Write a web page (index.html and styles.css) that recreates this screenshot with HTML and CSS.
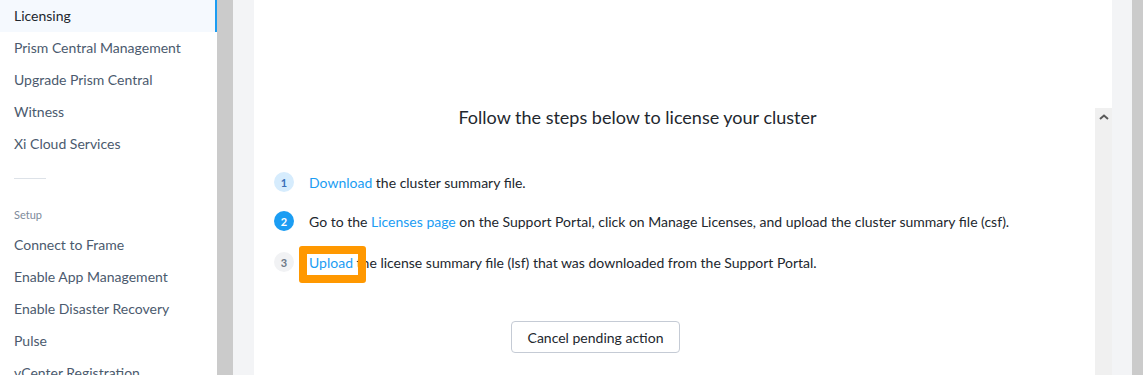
FILE: index.html
```html
<!DOCTYPE html>
<html>
<head>
<meta charset="utf-8">
<link rel="stylesheet" href="styles.css">
</head>
<body>
<div class="page">
  <nav class="sidebar">
    <div class="nav-item active">Licensing</div>
    <div class="nav-item">Prism Central Management</div>
    <div class="nav-item">Upgrade Prism Central</div>
    <div class="nav-item">Witness</div>
    <div class="nav-item">Xi Cloud Services</div>
    <div class="divider"></div>
    <div class="section">Setup</div>
    <div class="nav-item">Connect to Frame</div>
    <div class="nav-item">Enable App Management</div>
    <div class="nav-item">Enable Disaster Recovery</div>
    <div class="nav-item">Pulse</div>
    <div class="nav-item">vCenter Registration</div>
  </nav>
  <div class="gutter"></div>
  <main class="main">
    <div class="panel">
      <div class="scroll">
        <div class="content">
          <h1 class="title">Follow the steps below to license your cluster</h1>
          <ol class="steps">
            <li class="step"><span class="num n1">1</span><span><a class="link">Download</a> the cluster summary file.</span></li>
            <li class="step"><span class="num n2">2</span><span>Go to the <a class="link">Licenses page</a> on the Support Portal, click on Manage Licenses, and upload the cluster summary file (csf).</span></li>
            <li class="step"><span class="num n3">3</span><span class="upload-wrap"><a class="link">Upload</a><span class="highlight"></span></span><span>&nbsp;the license summary file (lsf) that was downloaded from the Support Portal.</span></li>
          </ol>
          <button class="btn">Cancel pending action</button>
        </div>
        <div class="vscroll">
          <svg width="10" height="6" viewBox="0 0 10 6"><path d="M1 5 L5 1.5 L9 5" fill="none" stroke="#5a5a5a" stroke-width="2"/></svg>
        </div>
      </div>
    </div>
  </main>
  <div class="rgutter"></div>
</div>
</body>
</html>
```

FILE: styles.css
```css
html, body { margin: 0; padding: 0; }
body { font-family: Lato, "Open Sans", sans-serif; overflow: hidden; width: 1143px; height: 375px; }
.page { display: flex; height: 375px; }
.sidebar { width: 217px; flex: none; background: #fff; }
.nav-item { height: 32px; line-height: 32px; padding-left: 14px; font-size: 14px; color: #4b5a6e; white-space: nowrap; box-sizing: border-box; }
.nav-item.active { background: #f5f9fe; color: #22272e; border-right: 2px solid #1b9df3; }
.divider { width: 32px; height: 1px; background: #dde2e8; margin: 18px 0 0 14px; }
.section { font-size: 11px; color: #7d8a9a; padding-left: 14px; margin-top: 29px; margin-bottom: 7px; line-height: 14px; }
.gutter { width: 16px; flex: none; background: #cbcbcb; }
.main { flex: 1; background: #f3f4f6; padding: 0 20px 0 21px; display: flex; }
.panel { flex: 1; background: #fff; padding-top: 108px; display: flex; }
.scroll { flex: 1; display: flex; }
.content { flex: 1; padding-left: 20px; }
.vscroll { width: 17px; background: #f0f0f0; display: flex; justify-content: center; padding-top: 6px; box-sizing: border-box; }
.vscroll svg { display: block; }
.rgutter { width: 11px; flex: none; background: #cbcbcb; }
.title { width: 727px; text-align: center; font-size: 18px; font-weight: 400; color: #22272e; margin: 0; line-height: 18px; }
.steps { list-style: none; margin: 46px 0 0 0; padding: 0; }
.step { display: flex; align-items: center; height: 20px; font-size: 14px; color: #22272e; white-space: nowrap; }
.step:nth-child(1) { margin-bottom: 19px; }
.step:nth-child(2) { margin-bottom: 21px; }
.num { width: 20px; height: 20px; border-radius: 50%; flex: none; display: flex; align-items: center; justify-content: center; font-size: 11px; font-weight: 700; margin-right: 15px; }
.n1 { background: #d6ecfd; color: #3a6fb8; }
.n2 { background: #1b9df3; color: #fff; }
.n3 { background: #f1f2f4; color: #6b7786; }
.link { color: #1b9df3; cursor: pointer; }
.upload-wrap { position: relative; display: inline-block; line-height: 17px; }
.highlight { position: absolute; left: -10px; top: -8px; right: -13px; bottom: -12px; border: 8px solid #ff9800; border-radius: 3px; }
.btn { display: block; margin: 49px 0 0 237px; height: 32px; width: 169px; background: #fff; border: 1px solid #c5cbd5; border-radius: 4px; font-family: inherit; font-size: 14px; color: #22272e; padding: 0; }
```
